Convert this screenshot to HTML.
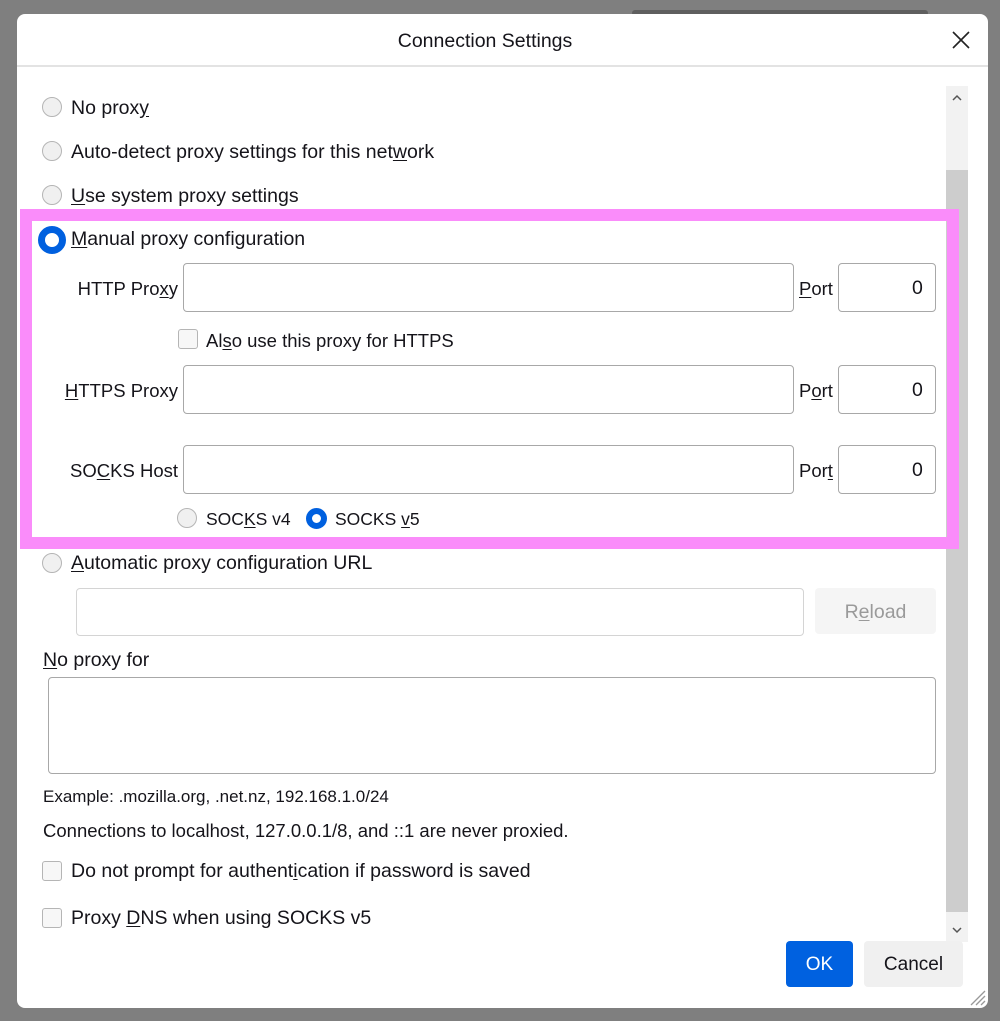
<!DOCTYPE html>
<html><head><style>
*{box-sizing:border-box;margin:0;padding:0}
body{width:1000px;height:1021px;background:#7f7f7f;position:relative;overflow:hidden;font-family:"Liberation Sans",sans-serif;font-size:19.5px;color:#15141a}
.a{position:absolute}
.t{position:absolute;height:24px;line-height:25px;white-space:nowrap}
.s{font-size:18.5px}
.r{position:absolute;width:20px;height:20px;border-radius:50%;border:1px solid #b5b5b5;background:#f0f0f0}
.cb{position:absolute;width:20px;height:20px;border-radius:3px;border:1px solid #b5b5b5;background:#f7f7f7}
.in{position:absolute;border:1px solid #a8a8a8;border-radius:4px;background:#fff}
.sel{position:absolute;border-radius:50%;background:#fff}
u{text-decoration:underline;text-underline-offset:2px}
</style></head><body>
<div class="a" style="left:632px;top:10px;width:296px;height:6px;background:#5f5f5f;border-radius:3px"></div>
<div class="a" style="left:17px;top:14px;width:971px;height:994px;background:#fff;border-radius:8px"></div>
<div class="t" style="left:17px;width:936px;text-align:center;top:29px;font-size:19.5px">Connection Settings</div>
<svg class="a" style="left:952px;top:31px" width="18" height="18"><path d="M1 1L17 17M17 1L1 17" stroke="#222" stroke-width="1.6"/></svg>
<div class="a" style="left:17px;top:65px;width:971px;height:2px;background:#e3e3e3"></div>
<div class="a" style="left:946px;top:86px;width:22px;height:856px;background:#f2f2f2"></div>
<div class="a" style="left:946px;top:170px;width:22px;height:742px;background:#cdcdcd"></div>
<svg class="a" style="left:951px;top:93px" width="12" height="10"><path d="M2 7L6 3L10 7" stroke="#555" stroke-width="1.5" fill="none"/></svg>
<svg class="a" style="left:951px;top:925px" width="12" height="10"><path d="M2 3L6 7L10 3" stroke="#555" stroke-width="1.5" fill="none"/></svg>

<div class="r" style="left:42px;top:97px"></div><div class="t" style="left:71px;top:96px">No prox<u>y</u></div>
<div class="r" style="left:42px;top:141px"></div><div class="t" style="left:71px;top:140px">Auto-detect proxy settings for this net<u>w</u>ork</div>
<div class="r" style="left:42px;top:185px"></div><div class="t" style="left:71px;top:184px"><u>U</u>se system proxy settings</div>

<div class="a" style="left:20px;top:209px;width:939px;height:340px;border:12px solid #fa8cfa"></div>
<div class="sel" style="left:38px;top:226px;width:28px;height:28px;border:7px solid #0060df"></div>
<div class="t" style="left:71px;top:227px"><u>M</u>anual proxy configuration</div>

<div class="t s" style="left:0;width:178px;text-align:right;top:276px">HTTP Pro<u>x</u>y</div>
<div class="in" style="left:183px;top:263px;width:611px;height:49px"></div>
<div class="t s" style="left:799px;top:276px"><u>P</u>ort</div>
<div class="in" style="left:838px;top:263px;width:98px;height:49px"></div>
<div class="t" style="left:912px;top:276px">0</div>

<div class="cb" style="left:178px;top:329px"></div><div class="t s" style="left:206px;top:328px">Al<u>s</u>o use this proxy for HTTPS</div>

<div class="t s" style="left:0;width:178px;text-align:right;top:378px"><u>H</u>TTPS Proxy</div>
<div class="in" style="left:183px;top:365px;width:611px;height:49px"></div>
<div class="t s" style="left:799px;top:378px">P<u>o</u>rt</div>
<div class="in" style="left:838px;top:365px;width:98px;height:49px"></div>
<div class="t" style="left:912px;top:378px">0</div>

<div class="t s" style="left:0;width:178px;text-align:right;top:458px">SO<u>C</u>KS Host</div>
<div class="in" style="left:183px;top:445px;width:611px;height:49px"></div>
<div class="t s" style="left:799px;top:458px">Por<u>t</u></div>
<div class="in" style="left:838px;top:445px;width:98px;height:49px"></div>
<div class="t" style="left:912px;top:458px">0</div>

<div class="r" style="left:177px;top:508px"></div><div class="t s" style="left:206px;top:507px;font-size:17.5px">SOC<u>K</u>S v4</div>
<div class="sel" style="left:306px;top:508px;width:21px;height:21px;border:6px solid #0060df"></div><div class="t s" style="left:335px;top:507px;font-size:17.5px">SOCKS <u>v</u>5</div>

<div class="r" style="left:42px;top:553px"></div><div class="t" style="left:71px;top:551px"><u>A</u>utomatic proxy configuration URL</div>
<div class="in" style="left:76px;top:588px;width:728px;height:48px;border-color:#d4d4d4"></div>
<div class="a" style="left:815px;top:588px;width:121px;height:46px;background:#f5f5f5;border-radius:4px;color:#9a9a9a;text-align:center;line-height:48px">R<u>e</u>load</div>

<div class="t" style="left:43px;top:648px"><u>N</u>o proxy for</div>
<div class="in" style="left:48px;top:677px;width:888px;height:97px"></div>
<div class="t" style="left:43px;top:784px;font-size:17px">Example: .mozilla.org, .net.nz, 192.168.1.0/24</div>
<div class="t" style="left:43px;top:818px;font-size:18.5px">Connections to localhost, 127.0.0.1/8, and ::1 are never proxied.</div>
<div class="cb" style="left:42px;top:861px"></div><div class="t" style="left:71px;top:859px">Do not prompt for authent<u>i</u>cation if password is saved</div>
<div class="cb" style="left:42px;top:908px"></div><div class="t" style="left:71px;top:906px">Proxy <u>D</u>NS when using SOCKS v5</div>

<div class="a" style="left:786px;top:941px;width:67px;height:46px;background:#0061e0;border-radius:4px;color:#fff;text-align:center;line-height:48px;font-size:19px">OK</div>
<div class="a" style="left:864px;top:941px;width:99px;height:46px;background:#f0f0f0;border-radius:4px;text-align:center;line-height:48px;font-size:19px">Cancel</div>
<svg class="a" style="left:968px;top:988px" width="18" height="18"><path d="M17 3L3 17M17 8L8 17M17 13L13 17" stroke="#999" stroke-width="1.3"/></svg>
</body></html>
